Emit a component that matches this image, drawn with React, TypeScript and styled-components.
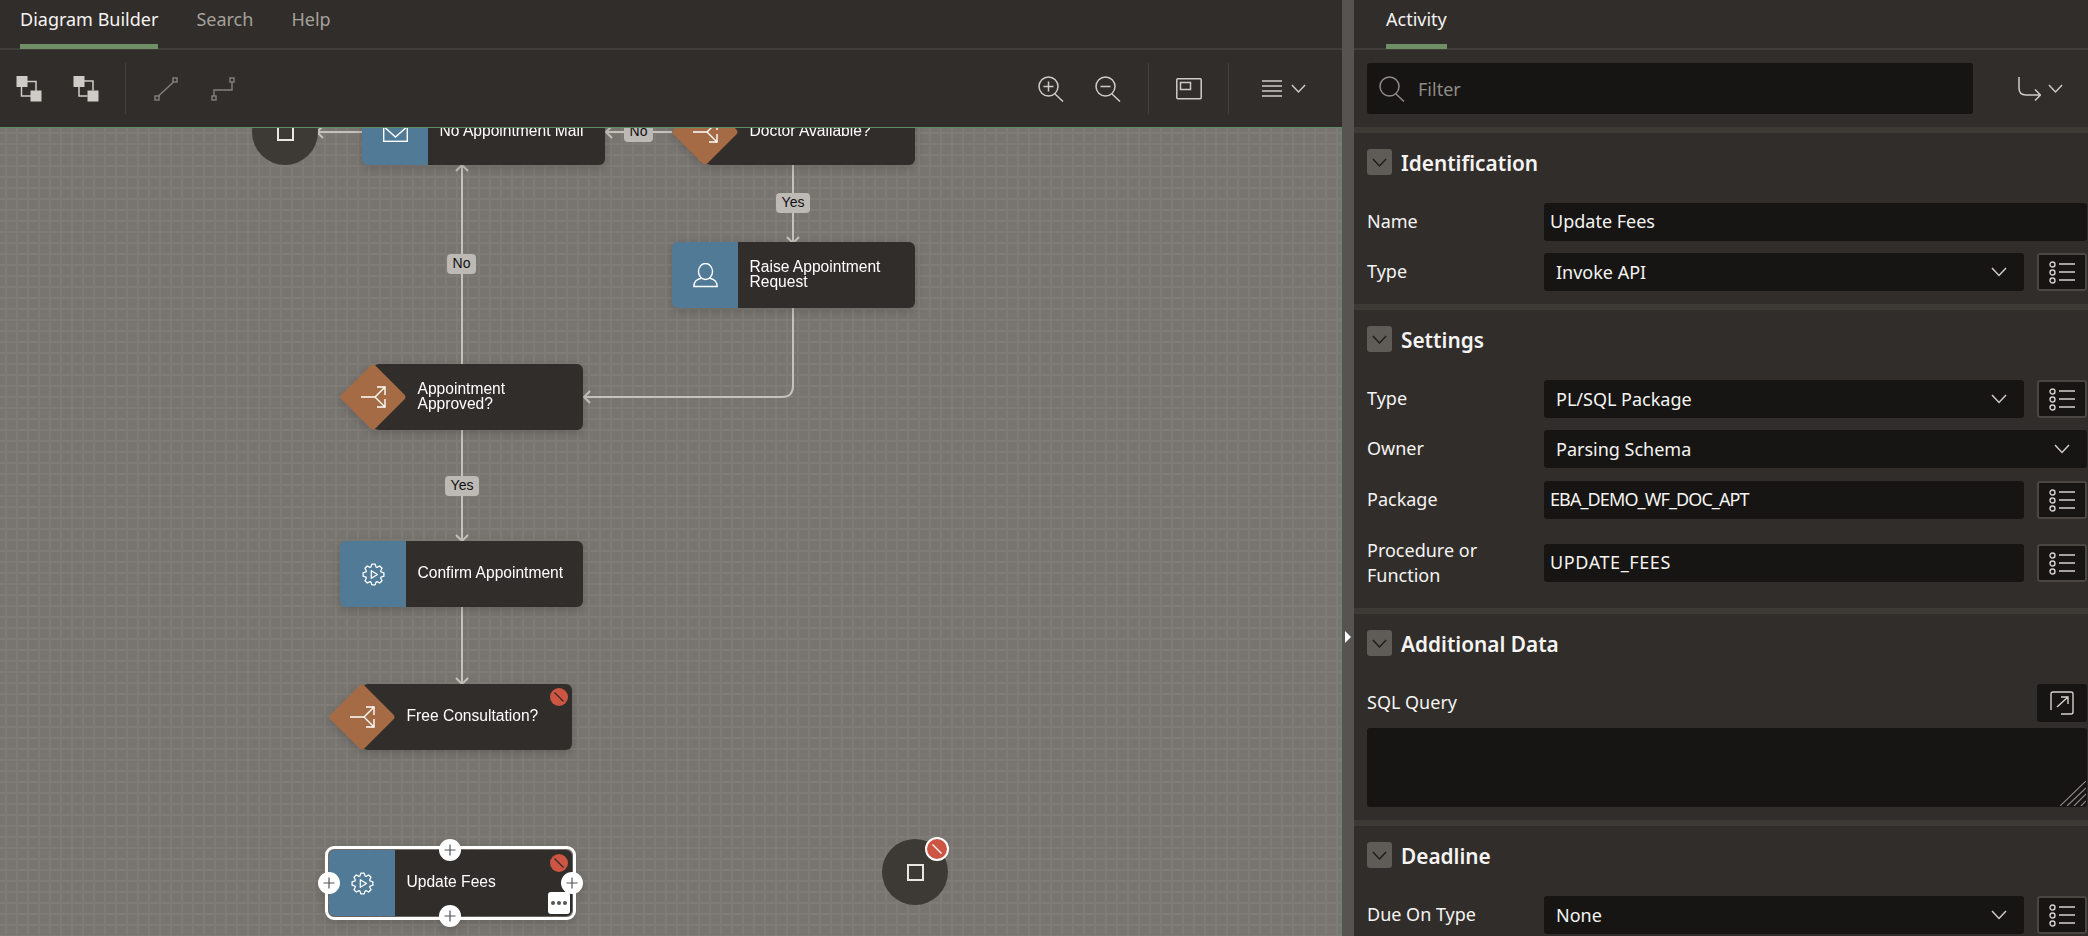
import React from "react";
import styled, { createGlobalStyle } from "styled-components";

const CANVAS_TOP = 128;

const Global = createGlobalStyle`
  html, body { margin: 0; padding: 0; background: #312d2a; }
  #root { width: 2088px; height: 936px; overflow: hidden; }
  * { box-sizing: border-box; }
`;

const Page = styled.div`
  display: flex;
  width: 2088px;
  height: 936px;
  overflow: hidden;
  background: #312d2a;
  color: #f5f4f2;
  font-family: "Noto Sans", "Open Sans", sans-serif;
  font-size: 18px;
`;

const LeftPanel = styled.div`
  width: 1342px;
  flex: none;
  display: flex;
  flex-direction: column;
`;

const Splitter = styled.div`
  width: 12px;
  flex: none;
  background: #575350;
  position: relative;
`;

const SplitArrow = styled.div`
  position: absolute;
  left: 3px;
  top: 631px;
  width: 0;
  height: 0;
  border-top: 6.5px solid transparent;
  border-bottom: 6.5px solid transparent;
  border-left: 6px solid #fff;
`;

const RightPanel = styled.div`
  width: 734px;
  flex: none;
  display: flex;
  flex-direction: column;
`;

const TabBar = styled.div<{ $inset: number }>`
  height: 50px;
  flex: none;
  display: flex;
  gap: 38px;
  padding-left: ${(p) => p.$inset}px;
  border-bottom: 2px solid #403c38;
`;

const Tab = styled.div<{ $active?: boolean }>`
  height: 49px;
  padding-top: 6px;
  line-height: 26px;
  font-size: 18px;
  color: ${(p) => (p.$active ? "#f5f4f2" : "#a5a19c")};
  border-bottom: 5px solid ${(p) => (p.$active ? "#6f8f66" : "transparent")};
`;

const Toolbar = styled.div`
  height: 77px;
  flex: none;
  display: flex;
  align-items: center;
  padding-right: 18px;
`;

const ToolBtn = styled.div`
  width: 57px;
  height: 51px;
  display: flex;
  align-items: center;
  justify-content: center;
  flex: none;
`;

const MenuBtn = styled.div`
  width: 84px;
  height: 51px;
  padding-left: 3px;
  display: flex;
  align-items: center;
  justify-content: center;
  gap: 9px;
  flex: none;
`;

const ToolDivider = styled.div<{ $ml?: number }>`
  width: 1px;
  height: 51px;
  margin: 0 11px 0 ${(p) => p.$ml ?? 11}px;
  background: #46423e;
  flex: none;
`;

const Spacer = styled.div`
  flex: 1;
`;

const Canvas = styled.div`
  flex: 1;
  position: relative;
  overflow: hidden;
  border-top: 1px solid #5d8a68;
  border-right: 1px solid #5d8a68;
  background-color: #78746f;
  background-image:
    linear-gradient(#7f7b76 2px, transparent 2px),
    linear-gradient(90deg, #7f7b76 2px, transparent 2px);
  background-size: 11px 11px;
  background-position: 5px 4px;
`;

const LinkLayer = styled.svg`
  position: absolute;
  left: 0;
  top: 0;
`;

const NodeBox = styled.div<{ $x: number; $y: number }>`
  position: absolute;
  left: ${(p) => p.$x}px;
  top: ${(p) => p.$y - CANVAS_TOP}px;
  width: 243px;
  height: 66px;
  display: flex;
  filter: drop-shadow(0 3px 5px rgba(0, 0, 0, 0.16));
`;

const ActivitySlot = styled.div`
  width: 66px;
  height: 66px;
  flex: none;
  display: flex;
  align-items: center;
  justify-content: center;
  background: #517a96;
  border-radius: 6px 0 0 6px;
`;

const DecisionSlot = styled.div`
  width: 66px;
  height: 66px;
  flex: none;
  display: flex;
  align-items: center;
  justify-content: center;
  position: relative;
  z-index: 1;
`;

const Diamond = styled.div`
  position: absolute;
  left: 9px;
  top: 9px;
  width: 48px;
  height: 48px;
  background: #a56b44;
  border-radius: 4px;
  transform: rotate(45deg);
`;

const SlotIcon = styled.svg`
  position: relative;
  flex: none;
`;

const NodeBody = styled.div<{ $decision?: boolean }>`
  flex: 1;
  min-width: 0;
  display: flex;
  align-items: center;
  background: #312d2a;
  border-radius: ${(p) => (p.$decision ? "6px" : "0 6px 6px 0")};
  margin-left: ${(p) => (p.$decision ? "-33px" : "0")};
  padding-left: ${(p) => (p.$decision ? "44.5px" : "11.5px")};
  padding-bottom: 3px;
  font-family: "Liberation Sans", Arial, sans-serif;
  font-size: 15.6px;
  line-height: 15px;
  color: #fff;
`;

const EdgeLabel = styled.div<{ $x: number; $y: number; $w: number }>`
  position: absolute;
  left: ${(p) => p.$x}px;
  top: ${(p) => p.$y - CANVAS_TOP}px;
  width: ${(p) => p.$w}px;
  height: 20px;
  border-radius: 4px;
  background: #bdb9b5;
  color: #111;
  text-align: center;
  font-family: "Liberation Sans", Arial, sans-serif;
  font-size: 14px;
  line-height: 19px;
`;

const Badge = styled.div`
  position: absolute;
  right: 4px;
  top: 4px;
  width: 18px;
  height: 18px;
  border-radius: 50%;
  background: #cc5543;
  z-index: 2;
  display: flex;
  align-items: center;
  justify-content: center;
`;

const SelectFrame = styled.div`
  position: absolute;
  inset: -4px;
  border: 3px solid #fff;
  border-radius: 9px;
  z-index: 2;
`;

const PlusBtn = styled.div<{ $x: number; $y: number }>`
  position: absolute;
  left: ${(p) => p.$x - 11}px;
  top: ${(p) => p.$y - 11}px;
  width: 22px;
  height: 22px;
  border-radius: 50%;
  background: #fff;
  z-index: 3;
  display: flex;
  align-items: center;
  justify-content: center;
`;

const MoreBtn = styled.div`
  position: absolute;
  right: 2px;
  bottom: 2px;
  width: 22px;
  height: 22px;
  border-radius: 3px;
  background: #fff;
  z-index: 3;
  display: flex;
  align-items: center;
  justify-content: center;
`;

const EndCircle = styled.div<{ $x: number; $y: number }>`
  position: absolute;
  left: ${(p) => p.$x - 33}px;
  top: ${(p) => p.$y - CANVAS_TOP - 33}px;
  width: 66px;
  height: 66px;
  border-radius: 50%;
  background: #3d3a35;
  display: flex;
  align-items: center;
  justify-content: center;
`;

const EndSquare = styled.div`
  width: 17px;
  height: 17px;
  border: 2px solid #e8e6e3;
`;

const EndBadge = styled.div`
  position: absolute;
  right: -1px;
  top: -2px;
  width: 24px;
  height: 24px;
  border-radius: 50%;
  background: #cc5543;
  border: 2.5px solid #fff;
  display: flex;
  align-items: center;
  justify-content: center;
`;

const FilterRow = styled.div`
  height: 77px;
  flex: none;
  display: flex;
  align-items: center;
  padding-left: 13px;
`;

const FilterBox = styled.div`
  width: 606px;
  height: 51px;
  display: flex;
  align-items: center;
  background: #161513;
  border-radius: 3px;
  padding-left: 12px;
  gap: 13px;
  color: #8f8b86;
  font-size: 18px;
`;

const RouteBtn = styled.div`
  margin-left: 45px;
  display: flex;
  align-items: center;
  gap: 7px;
`;

const Section = styled.section`
  border-top: 6px solid #3d3a35;
  padding: 16px 1px 13px 13px;
`;

const SectionHead = styled.div`
  height: 26px;
  display: flex;
  align-items: center;
  gap: 9px;
  margin-bottom: 28px;
`;

const Toggle = styled.div`
  width: 25px;
  height: 26px;
  background: #5f5b56;
  border-radius: 3px;
  display: flex;
  align-items: center;
  justify-content: center;
  flex: none;
`;

const Heading = styled.h3`
  margin: 1px 0 0;
  font-size: 20.8px;
  font-weight: 600;
  line-height: 26px;
  color: #f5f4f2;
`;

const FieldRow = styled.div<{ $h?: number; $mt?: number }>`
  display: grid;
  grid-template-columns: 177px 1fr;
  align-items: center;
  height: ${(p) => p.$h ?? 38}px;
  margin-top: ${(p) => p.$mt ?? 12}px;
  &:first-of-type {
    margin-top: 0;
  }
`;

const FieldLabel = styled.div`
  font-size: 18px;
  line-height: 25px;
  margin-bottom: 1px;
  color: #f5f4f2;
`;

const Controls = styled.div`
  display: flex;
  align-items: center;
  gap: 13px;
`;

const TextBox = styled.div<{ $spacing?: number }>`
  flex: 1;
  min-width: 0;
  height: 38px;
  line-height: 37px;
  padding-left: 6px;
  background: #161513;
  border-radius: 3px;
  font-size: 18px;
  letter-spacing: ${(p) => p.$spacing ?? 0}px;
  color: #f5f4f2;
`;

const SelectBox = styled.div`
  flex: 1;
  min-width: 0;
  height: 38px;
  display: flex;
  align-items: center;
  justify-content: space-between;
  padding: 0 17px 0 12px;
  background: #161513;
  border-radius: 3px;
  font-size: 18px;
  color: #f5f4f2;
`;

const ListBtn = styled.div`
  width: 50px;
  height: 38px;
  flex: none;
  display: flex;
  align-items: center;
  justify-content: center;
  background: #161513;
  border: 2px solid #4a4642;
  border-radius: 3px;
`;

const SqlHead = styled.div`
  height: 38px;
  display: flex;
  align-items: center;
  justify-content: space-between;
  margin-bottom: 6px;
`;

const ExpandBtn = styled.div`
  width: 50px;
  height: 38px;
  display: flex;
  align-items: center;
  justify-content: center;
  background: #161513;
  border-radius: 3px;
`;

const TextArea = styled.div`
  height: 79px;
  background: #161513;
  border-radius: 3px;
  position: relative;
`;

const Hatch = styled.svg`
  position: absolute;
  right: 1px;
  bottom: 1px;
`;

const gearPath = (() => {
  const teeth = 8;
  const pts: string[] = [];
  for (let i = 0; i < teeth; i++) {
    const a = (i / teeth) * Math.PI * 2 - Math.PI / 2;
    const step = (Math.PI * 2) / teeth;
    const spots: [number, number][] = [
      [8.3, a - step * 0.42],
      [11, a - step * 0.2],
      [11, a + step * 0.2],
      [8.3, a + step * 0.42],
    ];
    spots.forEach(([r, t]) => {
      pts.push(`${(12 + r * Math.cos(t)).toFixed(2)} ${(12 + r * Math.sin(t)).toFixed(2)}`);
    });
  }
  return `M${pts.join("L")}Z`;
})();

const Gear = () => (
  <SlotIcon width="23" height="23" viewBox="0 0 24 24" fill="none" stroke="#fff" strokeWidth="1.3" strokeLinejoin="round">
    <path d={gearPath} />
    <path d="M9.7 8 16.2 12 9.7 16Z" />
  </SlotIcon>
);

const Person = () => (
  <SlotIcon width="25" height="25" viewBox="0 0 25 25" fill="none" stroke="#fff" strokeWidth="1.4">
    <ellipse cx="12.5" cy="8.5" rx="7" ry="8" />
    <path d="M8.5 15C4 16.5.8 18 .8 23.5H24.2C24.2 18 21 16.5 16.5 15" />
  </SlotIcon>
);

const Mail = () => (
  <SlotIcon width="25" height="19" viewBox="0 0 25 19" fill="none" stroke="#fff" strokeWidth="1.4">
    <rect x=".7" y=".7" width="23.6" height="17.6" />
    <path d="M.7 3.5 12.5 14 24.3 3.5" />
  </SlotIcon>
);

const Branch = () => (
  <SlotIcon width="25" height="24" viewBox="0 0 25 24" fill="none" stroke="#fff" strokeWidth="1.4">
    <path d="M0 12H14L24 2M14 12 24 22" />
    <path d="M16 2H24V10M16 22H24V14" />
  </SlotIcon>
);

const Minus = ({ color }: { color: string }) => (
  <svg width="12" height="12" viewBox="0 0 12 12">
    <path d="M1.5 1.5 10.5 10.5" stroke={color} strokeWidth="1.2" />
  </svg>
);

const Plus = () => (
  <svg width="12" height="12" viewBox="0 0 12 12">
    <path d="M6 .5V11.5M.5 6H11.5" stroke="#555" strokeWidth="1.2" />
  </svg>
);

const Chevron = ({ color = "#cfcbc6", size = 16 }: { color?: string; size?: number }) => (
  <svg width={size} height={size * 0.6} viewBox="0 0 16 9.6" fill="none" stroke={color} strokeWidth="1.5">
    <path d="M1 1 8 8.5 15 1" />
  </svg>
);

const ListIcon = () => (
  <svg width="27" height="23" viewBox="0 0 27 23" fill="none" stroke="#d5d1cc" strokeWidth="1.4">
    <circle cx="3.5" cy="3.5" r="2.5" />
    <circle cx="3.5" cy="11.5" r="2.5" />
    <circle cx="3.5" cy="19.5" r="2.5" />
    <path d="M10 3H26M10 11H26M10 19H26" />
  </svg>
);

const StackIcon = ({ linked }: { linked?: boolean }) => (
  <svg width="26" height="26" viewBox="0 0 26 26" fill="none" stroke="#cfcbc6" strokeWidth="1.5">
    <rect x="0.5" y="0" width="11" height="11" fill="#cfcbc6" stroke="none" />
    <rect x="14.5" y="14.5" width="11" height="11" fill="#cfcbc6" stroke="none" />
    {linked ? (
      <path d="M11 5H20V14.5M6 11V20H14.5" />
    ) : (
      <rect x="5.5" y="5.5" width="14.5" height="14.5" />
    )}
  </svg>
);

const LineIcon = ({ elbow }: { elbow?: boolean }) => (
  <svg width="24" height="24" viewBox="0 0 24 24" fill="none" stroke="#85817c" strokeWidth="1.4">
    <rect x="1" y="19" width="4" height="4" />
    <rect x="19" y="1" width="4" height="4" />
    {elbow ? <path d="M21 5V13H3V19" /> : <path d="M4.5 19 19.5 5" />}
  </svg>
);

const ZoomIcon = ({ plus }: { plus?: boolean }) => (
  <svg width="26" height="26" viewBox="0 0 26 26" fill="none" stroke="#cfcbc6" strokeWidth="1.5">
    <circle cx="10.5" cy="10.5" r="9.5" />
    <path d="M17 18 25 25.5M5.5 10.5H15.5" />
    {plus && <path d="M10.5 5.5V15.5" />}
  </svg>
);

const OverviewIcon = () => (
  <svg width="26" height="22" viewBox="0 0 26 22" fill="none" stroke="#cfcbc6" strokeWidth="1.5">
    <rect x=".8" y=".8" width="24.4" height="20" rx="1" />
    <rect x="4.5" y="4.5" width="10" height="7" />
  </svg>
);

const MenuIcon = () => (
  <svg width="20" height="17" viewBox="0 0 20 17" fill="none" stroke="#cfcbc6" strokeWidth="1.5">
    <path d="M0 1H20M0 6H20M0 11H20M0 16H20" />
  </svg>
);

const SearchIcon = () => (
  <svg width="26" height="26" viewBox="0 0 26 26" fill="none" stroke="#8f8b86" strokeWidth="1.5">
    <circle cx="10.5" cy="10.5" r="9.5" />
    <path d="M17 18 25 25.5" />
  </svg>
);

const RouteIcon = () => (
  <svg width="23" height="24" viewBox="0 0 23 24" fill="none" stroke="#cfcbc6" strokeWidth="1.5">
    <path d="M1 0V11Q1 18 8 18H22M17 12.5 22.5 18 17 23.5" />
  </svg>
);

const ExpandIcon = () => (
  <svg width="24" height="24" viewBox="0 0 24 24" fill="none" stroke="#d5d1cc" strokeWidth="1.4">
    <path d="M1 19V3Q1 1 3 1H21Q23 1 23 3V21Q23 23 21 23H11" />
    <path d="M7 16 18 6M11 6H18V13" />
  </svg>
);

const Arrow = ({ x, y, dir }: { x: number; y: number; dir: "up" | "down" | "left" }) => {
  const d =
    dir === "up"
      ? `M${x - 6} ${y + 6}L${x} ${y}L${x + 6} ${y + 6}`
      : dir === "down"
      ? `M${x - 6} ${y - 6}L${x} ${y}L${x + 6} ${y - 6}`
      : `M${x + 6} ${y - 6}L${x} ${y}L${x + 6} ${y + 6}`;
  return <path d={d} />;
};

const Links = () => (
  <LinkLayer width="1341" height="808" viewBox={`0 ${CANVAS_TOP} 1341 808`} fill="none" stroke="#c5c1bb" strokeWidth="2">
    <path d="M672 132H607" />
    <Arrow x={606} y={132} dir="left" />
    <path d="M362 132H318" />
    <Arrow x={317} y={132} dir="left" />
    <path d="M462 364V166" />
    <Arrow x={462} y={165} dir="up" />
    <path d="M793 165V241" />
    <Arrow x={793} y={243} dir="down" />
    <path d="M793 308V386Q793 397 782 397H584" />
    <Arrow x={584} y={397} dir="left" />
    <path d="M462 430V540" />
    <Arrow x={462} y={541} dir="down" />
    <path d="M462 607V683" />
    <Arrow x={462} y={684} dir="down" />
  </LinkLayer>
);

const Node = ({
  x,
  y,
  label,
  icon,
  decision,
  error,
  children,
}: {
  x: number;
  y: number;
  label: React.ReactNode;
  icon: React.ReactNode;
  decision?: boolean;
  error?: boolean;
  children?: React.ReactNode;
}) => (
  <NodeBox $x={x} $y={y}>
    {decision ? (
      <DecisionSlot>
        <Diamond />
        {icon}
      </DecisionSlot>
    ) : (
      <ActivitySlot>{icon}</ActivitySlot>
    )}
    <NodeBody $decision={decision}>
      <div>{label}</div>
    </NodeBody>
    {error && (
      <Badge>
        <Minus color="#3a2a25" />
      </Badge>
    )}
    {children}
  </NodeBox>
);

const Select = ({ value }: { value: string }) => (
  <SelectBox>
    {value}
    <Chevron />
  </SelectBox>
);

const List = () => (
  <ListBtn>
    <ListIcon />
  </ListBtn>
);

const Head = ({ title }: { title: string }) => (
  <SectionHead>
    <Toggle>
      <Chevron color="#1e1c1a" size={15} />
    </Toggle>
    <Heading>{title}</Heading>
  </SectionHead>
);

export default function App() {
  return (
    <Page>
      <Global />
      <LeftPanel>
        <TabBar $inset={20}>
          <Tab $active>Diagram Builder</Tab>
          <Tab>Search</Tab>
          <Tab>Help</Tab>
        </TabBar>
        <Toolbar>
          <ToolBtn><StackIcon /></ToolBtn>
          <ToolBtn><StackIcon linked /></ToolBtn>
          <ToolDivider />
          <ToolBtn><LineIcon /></ToolBtn>
          <ToolBtn><LineIcon elbow /></ToolBtn>
          <Spacer />
          <ToolBtn><ZoomIcon plus /></ToolBtn>
          <ToolBtn><ZoomIcon /></ToolBtn>
          <ToolDivider $ml={12} />
          <ToolBtn><OverviewIcon /></ToolBtn>
          <ToolDivider />
          <MenuBtn>
            <MenuIcon />
            <Chevron size={15} />
          </MenuBtn>
        </Toolbar>
        <Canvas>
          <Links />
          <EndCircle $x={285} $y={132}><EndSquare /></EndCircle>
          <Node x={362} y={99} label="No Appointment Mail" icon={<Mail />} />
          <EdgeLabel $x={624} $y={122} $w={29}>No</EdgeLabel>
          <Node x={672} y={99} label="Doctor Available?" icon={<Branch />} decision />
          <EdgeLabel $x={776} $y={193} $w={34}>Yes</EdgeLabel>
          <EdgeLabel $x={447} $y={254} $w={29}>No</EdgeLabel>
          <Node x={672} y={242} label={<>Raise Appointment<br />Request</>} icon={<Person />} />
          <Node x={340} y={364} label={<>Appointment<br />Approved?</>} icon={<Branch />} decision />
          <EdgeLabel $x={445} $y={476} $w={34}>Yes</EdgeLabel>
          <Node x={340} y={541} label="Confirm Appointment" icon={<Gear />} />
          <Node x={329} y={684} label="Free Consultation?" icon={<Branch />} decision error />
          <Node x={329} y={850} label="Update Fees" icon={<Gear />} error>
            <SelectFrame />
            <PlusBtn $x={121} $y={0}><Plus /></PlusBtn>
            <PlusBtn $x={0} $y={33}><Plus /></PlusBtn>
            <PlusBtn $x={243} $y={33}><Plus /></PlusBtn>
            <PlusBtn $x={121} $y={66}><Plus /></PlusBtn>
            <MoreBtn>
              <svg width="16" height="4" viewBox="0 0 16 4" fill="#555">
                <circle cx="2" cy="2" r="2" />
                <circle cx="8" cy="2" r="2" />
                <circle cx="14" cy="2" r="2" />
              </svg>
            </MoreBtn>
          </Node>
          <EndCircle $x={915} $y={872}>
            <EndSquare />
            <EndBadge><Minus color="#fff" /></EndBadge>
          </EndCircle>
        </Canvas>
      </LeftPanel>
      <Splitter><SplitArrow /></Splitter>
      <RightPanel>
        <TabBar $inset={32}>
          <Tab $active>Activity</Tab>
        </TabBar>
        <FilterRow>
          <FilterBox>
            <SearchIcon />
            Filter
          </FilterBox>
          <RouteBtn>
            <RouteIcon />
            <Chevron size={15} />
          </RouteBtn>
        </FilterRow>
        <Section>
          <Head title="Identification" />
          <FieldRow>
            <FieldLabel>Name</FieldLabel>
            <Controls><TextBox>Update Fees</TextBox></Controls>
          </FieldRow>
          <FieldRow>
            <FieldLabel>Type</FieldLabel>
            <Controls><Select value="Invoke API" /><List /></Controls>
          </FieldRow>
        </Section>
        <Section>
          <Head title="Settings" />
          <FieldRow>
            <FieldLabel>Type</FieldLabel>
            <Controls><Select value="PL/SQL Package" /><List /></Controls>
          </FieldRow>
          <FieldRow>
            <FieldLabel>Owner</FieldLabel>
            <Controls><Select value="Parsing Schema" /></Controls>
          </FieldRow>
          <FieldRow $mt={13}>
            <FieldLabel>Package</FieldLabel>
            <Controls><TextBox $spacing={-0.9}>EBA_DEMO_WF_DOC_APT</TextBox><List /></Controls>
          </FieldRow>
          <FieldRow $h={64}>
            <FieldLabel>Procedure or<br />Function</FieldLabel>
            <Controls><TextBox $spacing={0.6}>UPDATE_FEES</TextBox><List /></Controls>
          </FieldRow>
        </Section>
        <Section>
          <Head title="Additional Data" />
          <SqlHead>
            <FieldLabel>SQL Query</FieldLabel>
            <ExpandBtn><ExpandIcon /></ExpandBtn>
          </SqlHead>
          <TextArea>
            <Hatch width="26" height="25" viewBox="0 0 26 25" stroke="#8a8680" strokeWidth="1.2">
              <path d="M0 25 26 0M7 25 26 7M14 25 26 13M21 25 26 20" />
            </Hatch>
          </TextArea>
        </Section>
        <Section>
          <Head title="Deadline" />
          <FieldRow>
            <FieldLabel>Due On Type</FieldLabel>
            <Controls><Select value="None" /><List /></Controls>
          </FieldRow>
        </Section>
      </RightPanel>
    </Page>
  );
}
